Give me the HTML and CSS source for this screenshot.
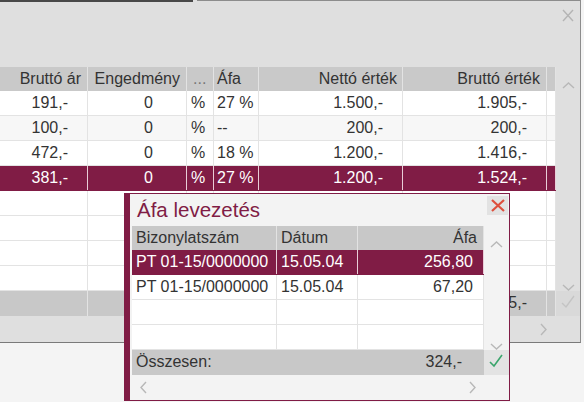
FILE: index.html
```html
<!DOCTYPE html>
<html lang="hu">
<head>
  <meta charset="UTF-8">
  <title>Áfa levezetés</title>
  <link rel="stylesheet" href="styles.css">
</head>
<body>
<div class="window">
  <div class="topline"><span class="tab"></span><span class="rest"></span></div>
  <div class="win-head">
    <svg width="12" height="13" viewBox="0 0 12 13"><path d="M1 1L11 12M11 1L1 12" fill="none" stroke="#b4b4b4" stroke-width="1.4"/></svg>
  </div>

  <div class="grid-wrap">
    <div class="grid">
      <div class="row head">
        <div class="c c1">Bruttó ár</div>
        <div class="c c2">Engedmény</div>
        <div class="c c3 dots">...</div>
        <div class="c c4">Áfa</div>
        <div class="c c5">Nettó érték</div>
        <div class="c c6">Bruttó érték</div>
        <div class="c c7"></div>
      </div>
      <div class="row">
        <div class="c c1 num">191,-</div>
        <div class="c c2 num">0</div>
        <div class="c c3">%</div>
        <div class="c c4">27 %</div>
        <div class="c c5 num">1.500,-</div>
        <div class="c c6 num">1.905,-</div>
        <div class="c c7"></div>
      </div>
      <div class="row alt">
        <div class="c c1 num">100,-</div>
        <div class="c c2 num">0</div>
        <div class="c c3">%</div>
        <div class="c c4">--</div>
        <div class="c c5 num">200,-</div>
        <div class="c c6 num">200,-</div>
        <div class="c c7"></div>
      </div>
      <div class="row">
        <div class="c c1 num">472,-</div>
        <div class="c c2 num">0</div>
        <div class="c c3">%</div>
        <div class="c c4">18 %</div>
        <div class="c c5 num">1.200,-</div>
        <div class="c c6 num">1.416,-</div>
        <div class="c c7"></div>
      </div>
      <div class="row sel">
        <div class="c c1 num">381,-</div>
        <div class="c c2 num">0</div>
        <div class="c c3">%</div>
        <div class="c c4">27 %</div>
        <div class="c c5 num">1.200,-</div>
        <div class="c c6 num">1.524,-</div>
        <div class="c c7"></div>
      </div>
      <div class="row"><div class="c c1"></div><div class="c c2"></div><div class="c c3"></div><div class="c c4"></div><div class="c c5"></div><div class="c c6"></div><div class="c c7"></div></div>
      <div class="row"><div class="c c1"></div><div class="c c2"></div><div class="c c3"></div><div class="c c4"></div><div class="c c5"></div><div class="c c6"></div><div class="c c7"></div></div>
      <div class="row"><div class="c c1"></div><div class="c c2"></div><div class="c c3"></div><div class="c c4"></div><div class="c c5"></div><div class="c c6"></div><div class="c c7"></div></div>
      <div class="row"><div class="c c1"></div><div class="c c2"></div><div class="c c3"></div><div class="c c4"></div><div class="c c5"></div><div class="c c6"></div><div class="c c7"></div></div>
      <div class="row foot">
        <div class="c c1"></div>
        <div class="c c2"></div>
        <div class="c c3"></div>
        <div class="c c4"></div>
        <div class="c c5 num">4.100,-</div>
        <div class="c c6 num">5.045,-</div>
        <div class="c c7"></div>
      </div>
    </div>

    <div class="vscroll">
      <div class="vs-top">
        <svg width="13" height="7" viewBox="0 0 13 7"><path d="M1 6L6.5 1L12 6" fill="none" stroke="#b8b8b8" stroke-width="1.4"/></svg>
      </div>
      <div class="vs-fill"></div>
      <div class="vs-down">
        <svg width="13" height="7" viewBox="0 0 13 7"><path d="M1 1L6.5 6L12 1" fill="none" stroke="#b8b8b8" stroke-width="1.4"/></svg>
      </div>
      <div class="vs-ok">
        <svg width="14" height="14" viewBox="0 0 14 14"><path d="M1 8L5 12L13 1" fill="none" stroke="#c4c4c4" stroke-width="1.4"/></svg>
      </div>
    </div>
  </div>

  <div class="hscroll">
    <svg width="7" height="13" viewBox="0 0 7 13"><path d="M1 1L6 6.5L1 12" fill="none" stroke="#b8b8b8" stroke-width="1.4"/></svg>
  </div>

  <!-- felugró ablak: áfa levezetés -->
  <div class="popup">
    <div class="pop-title">
      <span class="pop-name">Áfa levezetés</span>
      <span class="pop-close">
        <svg width="14" height="13" viewBox="0 0 14 13"><path d="M1 1L13 12M13 1L1 12" fill="none" stroke="#de4f3d" stroke-width="2.2"/></svg>
      </span>
    </div>
    <div class="pop-body">
      <div class="pop-grid">
        <div class="prow head">
          <div class="p p1">Bizonylatszám</div>
          <div class="p p2">Dátum</div>
          <div class="p p3 pr-head">Áfa</div>
        </div>
        <div class="prow sel">
          <div class="p p1">PT 01-15/0000000</div>
          <div class="p p2">15.05.04</div>
          <div class="p p3 pr">256,80</div>
        </div>
        <div class="prow">
          <div class="p p1">PT 01-15/0000000</div>
          <div class="p p2">15.05.04</div>
          <div class="p p3 pr">67,20</div>
        </div>
        <div class="prow"><div class="p p1"></div><div class="p p2"></div><div class="p p3"></div></div>
        <div class="prow"><div class="p p1"></div><div class="p p2"></div><div class="p p3"></div></div>
        <div class="prow foot">
          <div class="p p1">Összesen:</div>
          <div class="p p2"></div>
          <div class="p p3 pr-sum">324,-</div>
        </div>
        <div class="pop-hscroll">
          <svg width="7" height="13" viewBox="0 0 7 13"><path d="M6 1L1 6.5L6 12" fill="none" stroke="#b8b8b8" stroke-width="1.4"/></svg>
          <svg width="7" height="13" viewBox="0 0 7 13"><path d="M1 1L6 6.5L1 12" fill="none" stroke="#b8b8b8" stroke-width="1.4"/></svg>
        </div>
      </div>
      <div class="pop-vscroll">
        <div class="vs-top">
          <svg width="13" height="7" viewBox="0 0 13 7"><path d="M1 6L6.5 1L12 6" fill="none" stroke="#b8b8b8" stroke-width="1.4"/></svg>
        </div>
        <div class="vs-fill"></div>
        <div class="vs-down">
          <svg width="13" height="7" viewBox="0 0 13 7"><path d="M1 1L6.5 6L12 1" fill="none" stroke="#b8b8b8" stroke-width="1.4"/></svg>
        </div>
        <div class="pop-ok">
          <svg width="14" height="14" viewBox="0 0 14 14"><path d="M1 8L5 12L13 1" fill="none" stroke="#3aa56c" stroke-width="1.6"/></svg>
        </div>
        <div class="pop-corner"></div>
      </div>
    </div>
  </div>
</div>
</body>
</html>
```

FILE: styles.css
```css
* {
  margin: 0;
  padding: 0;
  box-sizing: border-box;
}

html,
body {
  height: 100%;
}

body {
  min-height: 402px;
  background: #f4f4f4;
  font-family: "Liberation Sans", Arial, sans-serif;
  font-size: 16px;
  color: #333;
}

.window {
  position: relative;
  width: 581px;
  height: 343px;
  background: #dfdfdf;
  border-right: 1px solid #8c8c8c;
  border-bottom: 1px solid #7a7a7a;
}

.topline {
  display: flex;
  height: 2px;
}

.topline .tab {
  width: 193px;
  background: #484848;
}

.topline .rest {
  flex: 1;
  margin-left: 4px;
  border-top: 1px solid #8c8c8c;
}

.win-head {
  height: 65px;
  display: flex;
  justify-content: flex-end;
  padding: 7px 6px 0 0;
}

.grid-wrap {
  display: flex;
}

.grid {
  width: 556px;
}

.row {
  display: flex;
  height: 25px;
  background: #fff;
  border-bottom: 1px solid #e3e3e3;
}

.row.alt {
  background: #f7f7f7;
}

.row.head {
  height: 24px;
  background: #c9c9c9;
  border-bottom: 0;
}

.row.foot {
  background: #c8c8c8;
  border-bottom: 0;
}

.row.sel {
  background: #801c45;
  color: #fff;
  border-bottom-color: #801c45;
}

.c {
  height: 100%;
  line-height: 24px;
  white-space: nowrap;
  overflow: hidden;
  border-right: 1px solid #e3e3e3;
}

.row.sel .c {
  border-right-color: #e9cdd7;
}

.c1 { width: 88px; text-align: right; padding-right: 6px; }
.c2 { width: 99px; text-align: right; padding-right: 6px; }
.c3 { width: 27px; padding-left: 4px; }
.c4 { width: 45px; padding-left: 3px; }
.c5 { width: 144px; text-align: right; padding-right: 5px; }
.c6 { width: 144px; text-align: right; padding-right: 6px; }
.c7 { width: 9px; }

.c.num { padding-right: 19px; }
.c2.num { padding-right: 33px; }

.dots {
  color: #777;
  padding-left: 6px;
}

.vscroll {
  width: 24px;
  height: 249px;
  display: flex;
  flex-direction: column;
  align-items: center;
}

.vs-top {
  height: 24px;
  padding-top: 8px;
}

.vs-fill {
  flex: 1;
}

.vs-down {
  height: 25px;
  padding-top: 11px;
}

.vs-ok {
  width: 100%;
  height: 25px;
  display: flex;
  justify-content: center;
  padding-top: 4px;
  background: #d9d9d9;
}

.hscroll {
  height: 26px;
  display: flex;
  justify-content: flex-end;
  align-items: center;
  padding-right: 33px;
}

/* popup */
.popup {
  position: absolute;
  left: 124px;
  top: 193px;
  z-index: 2;
  width: 386px;
  height: 208px;
  background: #f3f3f3;
  border: 1px solid #801c45;
  border-left-width: 6px;
}

.pop-title {
  height: 32px;
  display: flex;
  justify-content: space-between;
  align-items: flex-start;
}

.pop-name {
  font-size: 20.5px;
  line-height: 32px;
  color: #801c45;
  padding-left: 7px;
}

.pop-close {
  width: 21px;
  height: 19px;
  margin: 2px 1px 0 0;
  background: #e2e2e2;
  display: flex;
  align-items: center;
  justify-content: center;
}

.pop-body {
  display: flex;
  padding-left: 2px;
}

.pop-grid {
  width: 352px;
}

.prow {
  display: flex;
  height: 25px;
  background: #fff;
  border-bottom: 1px solid #e3e3e3;
}

.prow.head {
  height: 24px;
  background: #c8c8c8;
  border-bottom: 0;
}

.prow.sel {
  background: #801c45;
  color: #fff;
  border-bottom-color: #801c45;
}

.prow.foot {
  background: #c8c8c8;
  border-bottom: 0;
}

.p {
  height: 100%;
  line-height: 24px;
  white-space: nowrap;
  overflow: hidden;
  padding-left: 4px;
  border-right: 1px solid #e3e3e3;
}

.prow.sel .p {
  border-right-color: #e9cdd7;
}

.prow.foot .p {
  border-right-color: #c8c8c8;
}

.p1 { width: 145px; }
.p2 { width: 81px; }
.p3 { width: 126px; text-align: right; }

.p3.pr-head { padding-right: 6px; }
.p3.pr { padding-right: 10px; }
.p3.pr-sum { padding-right: 21px; }

.pop-hscroll {
  height: 25px;
  display: flex;
  justify-content: space-between;
  align-items: center;
  padding: 0 8px;
}

.pop-vscroll {
  width: 25px;
  display: flex;
  flex-direction: column;
  align-items: center;
}

.pop-vscroll .vs-fill {
  min-height: 50px;
}

.pop-ok {
  width: 100%;
  height: 25px;
  display: flex;
  justify-content: center;
  padding: 4px 2px 0 0;
  background: #e3e3e3;
}

.pop-corner {
  height: 25px;
}
```
